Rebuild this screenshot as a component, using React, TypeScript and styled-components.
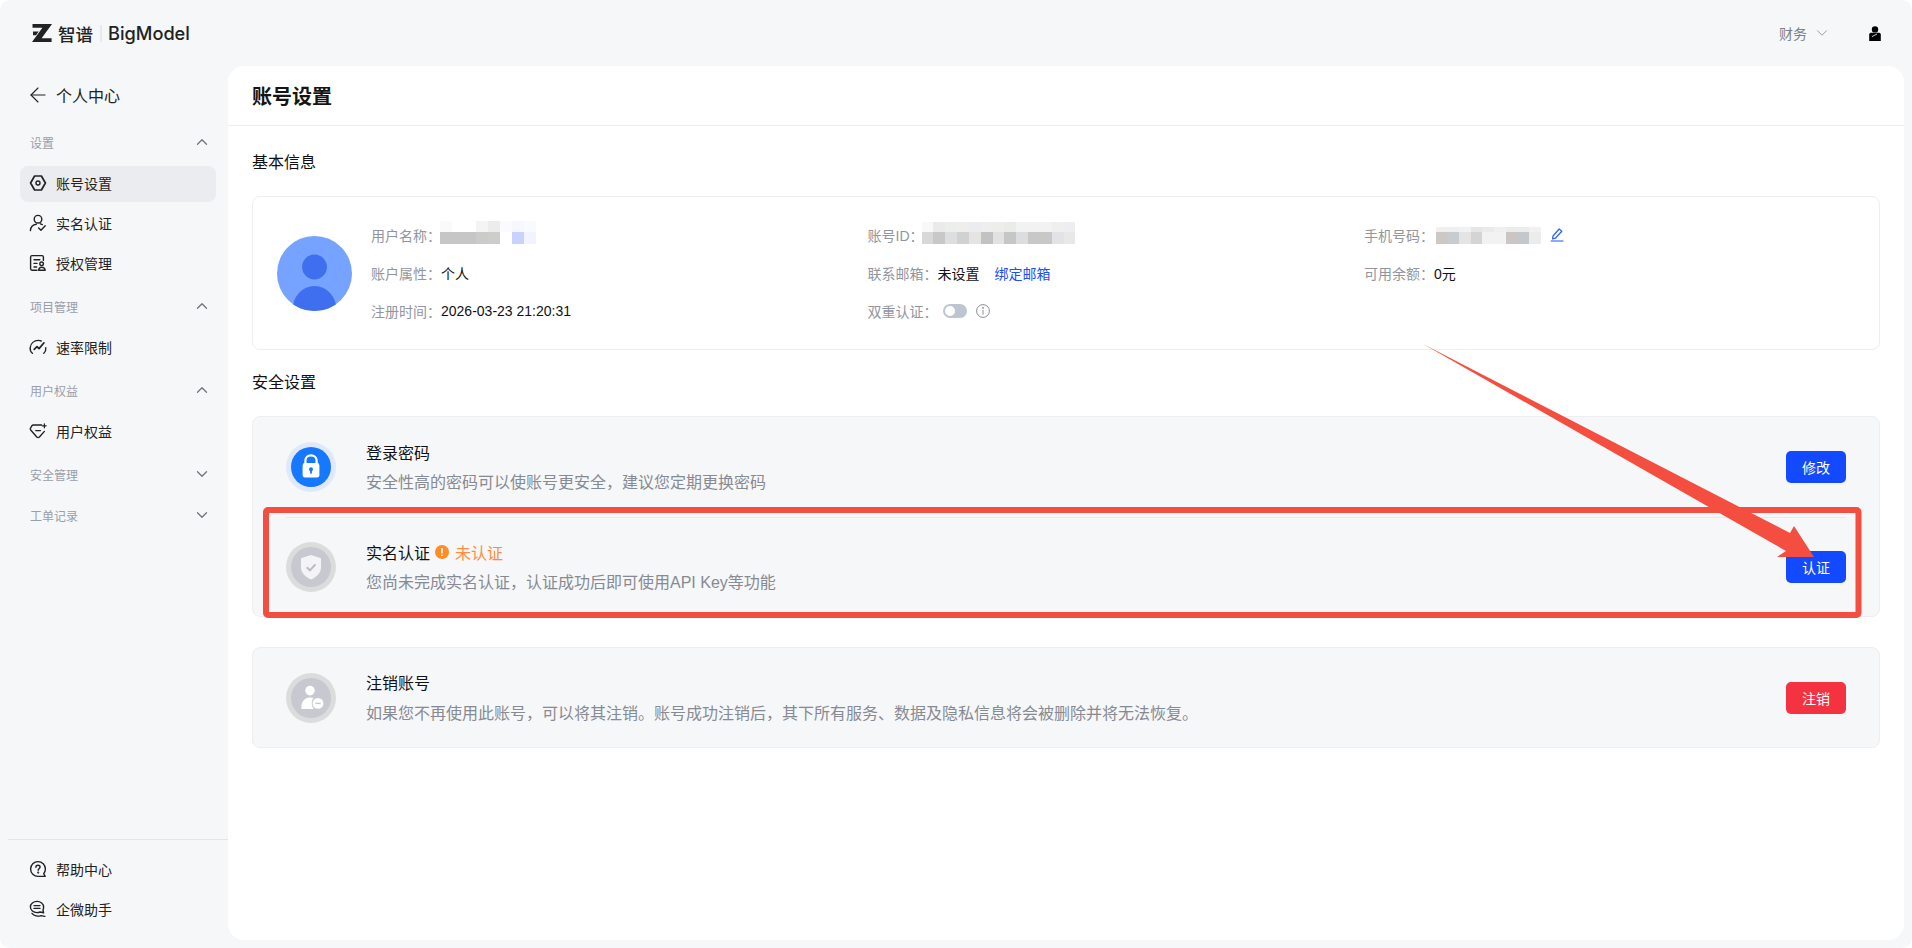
import styled, { createGlobalStyle } from 'styled-components'
import type { ReactNode } from 'react'
import { ArrowLeft, ChevronDown, ChevronUp } from 'lucide-react'

const GlobalStyle = createGlobalStyle`
  html, body {
    margin: 0;
    padding: 0;
    background: #fff;
  }
  * {
    box-sizing: border-box;
  }
  body {
    font-family: "Liberation Sans", "Noto Sans CJK SC", sans-serif;
    font-size: 14px;
    color: #111;
  }
`

const Frame = styled.div`
  position: relative;
  width: 1912px;
  height: 948px;
  background: #f6f7f9;
  border-radius: 10px;
  overflow: hidden;
  display: flex;
  flex-direction: column;
`

const TopBar = styled.header`
  height: 66px;
  flex-shrink: 0;
  display: flex;
  align-items: center;
  justify-content: space-between;
  padding: 0 31px 0 32px;
`

const Brand = styled.div`
  display: flex;
  align-items: center;
  color: #222;
`

const BrandCn = styled.span`
  margin-left: 6px;
  font-family: "Noto Sans CJK SC", sans-serif;
  font-size: 17.5px;
  font-weight: 500;
`

const BrandDivider = styled.i`
  width: 2px;
  height: 17px;
  margin: 0 6px 0 7px;
  background: #e8e9ec;
`

const BrandEn = styled.span`
  font-family: Inter, sans-serif;
  font-size: 18.2px;
  font-weight: 500;
`

const TopRight = styled.div`
  display: flex;
  align-items: center;
`

const RoleSwitch = styled.div`
  display: flex;
  align-items: center;
  gap: 6px;
  margin-right: 38px;
  font-size: 14px;
  color: #7c7f88;
`

const Body = styled.div`
  flex: 1;
  min-height: 0;
  display: flex;
  padding-bottom: 8px;
`

const Sidebar = styled.aside`
  width: 228px;
  flex-shrink: 0;
  display: flex;
  flex-direction: column;
  margin-bottom: -8px;
`

const BackLink = styled.div`
  height: 58px;
  padding: 0 0 0 26px;
  display: flex;
  align-items: center;
  gap: 6px;
  font-size: 16px;
  color: #222;
`

const Nav = styled.nav`
  flex: 1;
  padding: 1px 12px 0 20px;
`

const Group = styled.div<{ $open?: boolean }>`
  padding-bottom: ${(p) => (p.$open ? '7px' : '0')};
`

const GroupHead = styled.div`
  height: 36px;
  margin-bottom: 5px;
  padding: 0 5px 2px 10px;
  display: flex;
  align-items: center;
  justify-content: space-between;
  font-size: 12px;
  color: #999ea8;
  svg {
    color: #6f737c;
  }
`

const Item = styled.div<{ $active?: boolean }>`
  height: 36px;
  margin-bottom: 4px;
  padding: 0 0 2px 9px;
  display: flex;
  align-items: center;
  gap: 9px;
  border-radius: 8px;
  font-size: 14px;
  color: #222;
  background: ${(p) => (p.$active ? '#ebecef' : 'transparent')};
  &:last-child {
    margin-bottom: 0;
  }
`

const SideFoot = styled.div`
  margin-left: 8px;
  padding: 12px 12px 11px 12px;
  border-top: 1px solid #e3e5e9;
  height: 109px;
  display: flex;
  flex-direction: column;
`

const Main = styled.main`
  flex: 1;
  min-width: 0;
  margin-right: 8px;
  background: #fff;
  border-radius: 16px;
  display: flex;
  flex-direction: column;
`

const PageTitle = styled.h1`
  height: 60px;
  margin: 0;
  padding: 0 24px;
  display: flex;
  align-items: center;
  border-bottom: 1px solid #eceef0;
  font-size: 20px;
  font-weight: 700;
  color: #151515;
`

const Content = styled.div`
  padding: 0 24px;
`

const SectionTitle = styled.h2<{ $tight?: boolean }>`
  height: ${(p) => (p.$tight ? '66px' : '70px')};
  margin: 0;
  padding-bottom: ${(p) => (p.$tight ? '5px' : '0')};
  display: flex;
  align-items: center;
  font-size: 16px;
  font-weight: 400;
  color: #111;
`

const InfoCard = styled.section`
  height: 154px;
  display: flex;
  align-items: center;
  padding: 0 20px 0 24px;
  border: 1px solid #eceef0;
  border-radius: 8px;
`

const InfoGrid = styled.div`
  flex: 1;
  margin-left: 19px;
  display: grid;
  grid-template-columns: repeat(3, 496.5px);
  grid-auto-rows: 38px;
  align-items: center;
`

const InfoCell = styled.div`
  display: flex;
  align-items: center;
  height: 24px;
  white-space: nowrap;
  color: #111;
`

const Label = styled.span`
  color: #92959e;
`

const TextLink = styled.a`
  margin-left: 15px;
  color: #1a4fff;
`

const Toggle = styled.span`
  position: relative;
  width: 24px;
  height: 14px;
  margin-left: 5px;
  border-radius: 7px;
  background: #bfc5d0;
  &::after {
    content: '';
    position: absolute;
    left: 2px;
    top: 2px;
    width: 10px;
    height: 10px;
    border-radius: 50%;
    background: #fff;
  }
`

const InfoDot = styled.span`
  width: 14px;
  height: 14px;
  margin-left: 9px;
  display: flex;
`

const EditBtn = styled.span`
  margin-left: 9px;
  display: flex;
`

const MosaicGrid = styled.div<{ $cols: number; $cell: number; $rows: string; $pull: number }>`
  display: grid;
  grid-template-columns: repeat(${(p) => p.$cols}, ${(p) => p.$cell}px);
  grid-template-rows: ${(p) => p.$rows};
  align-self: flex-end;
  margin-bottom: 3px;
  margin-left: ${(p) => p.$pull}px;
`

const SecurityCard = styled.section<{ $gapTop?: number }>`
  margin-top: ${(p) => p.$gapTop ?? 0}px;
  padding: 0 33px;
  border: 1px solid #eceef0;
  border-radius: 8px;
  background: #f6f7f9;
`

const SecurityRow = styled.div`
  height: 99px;
  display: flex;
  align-items: center;
  &:not(:last-child) {
    height: 100px;
  }
  & + & {
    border-top: 1px solid #e8eaed;
  }
`

const RowIcon = styled.div`
  width: 50px;
  height: 50px;
  flex-shrink: 0;
`

const RowText = styled.div`
  flex: 1;
  margin-left: 30px;
  display: flex;
  flex-direction: column;
  gap: 8px;
`

const RowTitle = styled.div`
  display: flex;
  align-items: center;
  height: 23px;
  font-size: 16px;
  color: #111;
`

const RowDesc = styled.div`
  font-size: 16px;
  line-height: 23px;
  color: #868a93;
`

const Warn = styled.span`
  margin-left: 5px;
  display: flex;
  align-items: center;
  gap: 6px;
  color: #ff8c42;
`

const ActionButton = styled.button<{ $danger?: boolean }>`
  width: 60px;
  height: 32px;
  border: 0;
  border-radius: 5px;
  padding: 0;
  font: inherit;
  font-size: 14px;
  color: #fff;
  background: ${(p) => (p.$danger ? '#f5323f' : '#1349ff')};
`

const Annotation = styled.svg`
  position: absolute;
  left: 0;
  top: 0;
  pointer-events: none;
`

const LogoMark = () => (
  <svg width="20" height="18" viewBox="0 0 20 18">
    <path d="M0.5 0H20L9.6 14.2H19.6V18H0L10.4 3.8H0.5Z" fill="#222" />
    <path d="M1 7.6H6.6L4 11.2H1Z" fill="#222" />
  </svg>
)

const UserGlyph = () => (
  <svg width="12" height="15" viewBox="0 0 12 15" style={{ marginTop: 1 }}>
    <circle cx="6" cy="3.4" r="3.2" fill="#000" />
    <path d="M0.2 15V8.6C0.2 7.4 1.2 6.8 2.4 6.8H9.6C10.8 6.8 11.8 7.4 11.8 8.6V15Z" fill="#000" />
    <path d="M3 10.6L8 8" stroke="#fff" strokeWidth="0.8" />
  </svg>
)

type GlyphProps = { children: ReactNode }
const NavGlyph = ({ children }: GlyphProps) => (
  <svg
    width="18"
    height="18"
    viewBox="0 0 18 18"
    fill="none"
    stroke="#222"
    strokeWidth="1.4"
    strokeLinecap="round"
    strokeLinejoin="round"
  >
    {children}
  </svg>
)

const GearIcon = () => (
  <NavGlyph>
    <path d="M5.6 2H12.4L16.4 9L12.4 16H5.6L1.6 9Z" strokeWidth="1.7" />
    <circle cx="9" cy="9" r="2" />
  </NavGlyph>
)

const PersonCheckIcon = () => (
  <NavGlyph>
    <circle cx="9" cy="5.2" r="3.8" />
    <path d="M1.4 16.6C1.6 13 4 10.6 7.4 10.2" />
    <path d="M9.6 14L12 16.2L16.2 11.8" />
    <path d="M11.4 9.8L13.4 10.6" />
  </NavGlyph>
)

const LicenseIcon = () => (
  <NavGlyph>
    <path d="M8 16.2H3C2.2 16.2 1.6 15.6 1.6 14.8V3C1.6 2.2 2.2 1.6 3 1.6H13C13.8 1.6 14.4 2.2 14.4 3V6.4" />
    <path d="M5 5.8H10.8" />
    <path d="M5 9.4H8" />
    <path d="M5 13H7.6" />
    <circle cx="12.6" cy="9.8" r="1.8" />
    <path d="M9.6 16.2C9.8 14 11 13.2 12.8 13.2C14.6 13.2 15.8 14 16.2 16.2Z" />
  </NavGlyph>
)

const SpeedIcon = () => (
  <NavGlyph>
    <path d="M3.4 15.2C1.6 13.8 1 11.6 1.2 9.6C1.8 5.4 5 2.4 9.2 2.4C10.2 2.4 11.4 2.6 12.2 3" />
    <path d="M14.8 15.2C16.4 13.8 17 11.6 16.8 9.8" />
    <path d="M5.2 11.4L8 8.6L10 10.6L15 4.8" strokeWidth="1.7" />
  </NavGlyph>
)

const DiamondIcon = () => (
  <NavGlyph>
    <path d="M12.6 3H4.6C3.8 3 3.2 3.3 2.7 4L1.4 6.4C1.2 7 1.3 7.6 1.7 8L7.8 15C8.6 15.8 9.6 15.8 10.4 15L15.4 9.4" />
    <path d="M6.8 8.6H11.4" />
    <path d="M15.4 1.8V5.8M13.4 3.8H17.2" strokeWidth="1.2" />
  </NavGlyph>
)

const HelpIcon = () => (
  <NavGlyph>
    <path d="M9 1.6C4.9 1.6 1.6 4.9 1.6 9C1.6 13.1 4.9 16.4 9 16.4H16.2L14.7 13.6C15.8 12.4 16.4 10.8 16.4 9C16.4 4.9 13.1 1.6 9 1.6Z" />
    <path d="M6.9 7.2C6.9 6 7.8 5.2 9 5.2C10.2 5.2 11.1 6 11.1 7.1C11.1 8.4 9.2 8.6 9.2 10.2" />
    <circle cx="9.2" cy="12.6" r="0.4" fill="#222" />
  </NavGlyph>
)

const ChatIcon = () => (
  <NavGlyph>
    <path d="M8 1.4C4.4 1.4 1.4 3.8 1.4 7C1.4 10.2 4.4 12.6 8 12.6C9 12.6 10 12.4 11 12L14.6 12.8L14 10C14.4 9.2 14.6 8 14.6 7C14.6 3.8 11.6 1.4 8 1.4Z" />
    <path d="M5 5.6H11M5 8.4H11" />
    <path d="M3 13.4C5 16 9 16.8 12 15.6L15.8 16.4" />
  </NavGlyph>
)

const LockBadge = () => (
  <svg width="50" height="50" viewBox="0 0 50 50">
    <circle cx="25" cy="25" r="25" fill="#e0e8fb" />
    <circle cx="25" cy="25" r="20" fill="#1677ff" />
    <path d="M19.4 22V18.6C19.4 15.4 21.8 13.4 25 13.4C28.2 13.4 30.6 15.4 30.6 18.6V22" fill="none" stroke="#fff" strokeWidth="2.2" />
    <rect x="16.6" y="21" width="16.8" height="14.6" rx="2.4" fill="#fff" />
    <circle cx="25" cy="27.2" r="2" fill="#1677ff" />
    <rect x="24.1" y="27.6" width="1.8" height="4" fill="#1677ff" />
  </svg>
)

const ShieldBadge = () => (
  <svg width="50" height="50" viewBox="0 0 50 50">
    <circle cx="25" cy="25" r="25" fill="#dcdcdc" />
    <circle cx="25" cy="25" r="20" fill="#c8c9d0" />
    <path d="M25 13L35 16.2V25C35 31 30.6 35 25 37.4C19.4 35 15 31 15 25V16.2Z" fill="#f4f4f6" />
    <path d="M20.8 25.2L24 28.4L29.4 22.4" fill="none" stroke="#b9bac2" strokeWidth="2" />
  </svg>
)

const UserMinusBadge = () => (
  <svg width="50" height="50" viewBox="0 0 50 50">
    <circle cx="25" cy="25" r="25" fill="#dcdcdc" />
    <circle cx="25" cy="25" r="20" fill="#c8c9d0" />
    <circle cx="24" cy="17.6" r="4.8" fill="#fff" />
    <path d="M15.4 36C15 29.6 17.8 24.4 24 24.4C25.4 24.4 26.6 24.6 27.6 25C25.2 27.6 25 32.6 27.8 36Z" fill="#fff" />
    <circle cx="32" cy="30.4" r="5.4" fill="#fff" />
    <rect x="29.4" y="29.7" width="5.2" height="1.4" fill="#c8c9d0" />
  </svg>
)

const Avatar = () => (
  <svg width="75" height="75" viewBox="0 0 75 75" style={{ flexShrink: 0 }}>
    <defs>
      <clipPath id="avatar-clip">
        <circle cx="37.5" cy="37.5" r="37.5" />
      </clipPath>
    </defs>
    <circle cx="37.5" cy="37.5" r="37.5" fill="#76a3ff" />
    <g clipPath="url(#avatar-clip)" fill="#3f6fee">
      <circle cx="37.5" cy="31" r="12.4" />
      <ellipse cx="37.5" cy="74" rx="22" ry="24" />
    </g>
  </svg>
)

const InfoGlyph = () => (
  <svg width="14" height="14" viewBox="0 0 14 14" fill="none" stroke="#8a8d95" strokeWidth="1">
    <circle cx="7" cy="7" r="6.4" />
    <path d="M7 6V10.6" />
    <circle cx="7" cy="3.9" r="0.5" fill="#8a8d95" />
  </svg>
)

const WarnGlyph = () => (
  <svg width="14" height="14" viewBox="0 0 14 14">
    <circle cx="7" cy="7" r="7" fill="#ff8c26" />
    <rect x="6.2" y="3" width="1.6" height="5.4" rx="0.6" fill="#fff" />
    <circle cx="7" cy="10.3" r="0.9" fill="#fff" />
  </svg>
)

const EditGlyph = () => (
  <svg width="14" height="14" viewBox="0 0 14 14" fill="none" stroke="#2f66f0" strokeWidth="1.3" strokeLinejoin="round">
    <path d="M9.2 1L11.8 3.2L5.4 10.2L2.6 10.8L3 8Z" />
    <path d="M0.8 13H13.4" stroke="#5c86f5" strokeWidth="1.4" />
  </svg>
)

type MosaicProps = { colors: string[]; cols: number; cell: number; rows: string; pull?: number }
const Mosaic = ({ colors, cols, cell, rows, pull = 0 }: MosaicProps) => (
  <MosaicGrid $cols={cols} $cell={cell} $rows={rows} $pull={pull}>
    {colors.map((c, i) => (
      <div key={i} style={{ background: c }} />
    ))}
  </MosaicGrid>
)

const nameCells = [
  '#fafafa', '#ffffff', '#ffffff', '#f4f4f4', '#ececec', '#fafaff', '#f6f7ff', '#f9faff',
  '#c6c6c6', '#c6c6c6', '#c6c6c6', '#cbcbc9', '#cdcdcb', '#ffffff', '#c8d2fb', '#f1f3ff',
]
const idCells = [
  '#f8f8f8', '#eaeaea', '#eceeee', '#f0eeec', '#eaecef', '#eeeeee', '#eeedeb', '#eaecea', '#f2f2f2', '#f2f2f2', '#f2f2f2', '#efefef', '#eeeef0',
  '#d8d8d6', '#c8c8c8', '#dcdee0', '#d0d2d2', '#e6e4e2', '#c2c2c2', '#e2e2e2', '#c6c6c6', '#dcdde0', '#c8c8c8', '#cac8c6', '#e2e3e6', '#e8e8e8',
]
const phoneCells = [
  '#f0f0f0', '#f0f0f0', '#f2f2f2', '#e6e6e6', '#eaeaea', '#f0f0f0', '#ececec', '#ececec', '#f2f2f2',
  '#cbc8c6', '#c6ccd0', '#e4e4e4', '#d4d4d4', '#f2f2f2', '#f2f2f2', '#cbc6c3', '#c4c8cc', '#ececec',
]

const App = () => {
  return (
    <Frame>
      <GlobalStyle />
      <TopBar>
        <Brand>
          <LogoMark />
          <BrandCn>智谱</BrandCn>
          <BrandDivider />
          <BrandEn>BigModel</BrandEn>
        </Brand>
        <TopRight>
          <RoleSwitch>
            财务
            <ChevronDown size={18} strokeWidth={1} />
          </RoleSwitch>
          <UserGlyph />
        </TopRight>
      </TopBar>
      <Body>
        <Sidebar>
          <BackLink>
            <ArrowLeft size={24} strokeWidth={1.1} />
            个人中心
          </BackLink>
          <Nav>
            <Group $open>
              <GroupHead>
                设置
                <ChevronUp size={18} strokeWidth={1.7} />
              </GroupHead>
              <Item $active>
                <GearIcon />
                账号设置
              </Item>
              <Item>
                <PersonCheckIcon />
                实名认证
              </Item>
              <Item>
                <LicenseIcon />
                授权管理
              </Item>
            </Group>
            <Group $open>
              <GroupHead>
                项目管理
                <ChevronUp size={18} strokeWidth={1.7} />
              </GroupHead>
              <Item>
                <SpeedIcon />
                速率限制
              </Item>
            </Group>
            <Group $open>
              <GroupHead>
                用户权益
                <ChevronUp size={18} strokeWidth={1.7} />
              </GroupHead>
              <Item>
                <DiamondIcon />
                用户权益
              </Item>
            </Group>
            <Group>
              <GroupHead>
                安全管理
                <ChevronDown size={18} strokeWidth={1.7} />
              </GroupHead>
            </Group>
            <Group>
              <GroupHead>
                工单记录
                <ChevronDown size={18} strokeWidth={1.7} />
              </GroupHead>
            </Group>
          </Nav>
          <SideFoot>
            <Item>
              <HelpIcon />
              帮助中心
            </Item>
            <Item>
              <ChatIcon />
              企微助手
            </Item>
          </SideFoot>
        </Sidebar>
        <Main>
          <PageTitle>账号设置</PageTitle>
          <Content>
            <SectionTitle>基本信息</SectionTitle>
            <InfoCard>
              <Avatar />
              <InfoGrid>
                <InfoCell>
                  <Label>用户名称：</Label>
                  <Mosaic colors={nameCells} cols={8} cell={12} rows="11px 12px" pull={-1} />
                </InfoCell>
                <InfoCell>
                  <Label>账号ID：</Label>
                  <Mosaic colors={idCells} cols={13} cell={11.85} rows="10px 12px" pull={-2} />
                </InfoCell>
                <InfoCell>
                  <Label>手机号码：</Label>
                  <Mosaic colors={phoneCells} cols={9} cell={11.7} rows="5px 12px" pull={1.5} />
                  <EditBtn>
                    <EditGlyph />
                  </EditBtn>
                </InfoCell>
                <InfoCell>
                  <Label>账户属性：</Label>个人
                </InfoCell>
                <InfoCell>
                  <Label>联系邮箱：</Label>未设置
                  <TextLink>绑定邮箱</TextLink>
                </InfoCell>
                <InfoCell>
                  <Label>可用余额：</Label>0元
                </InfoCell>
                <InfoCell>
                  <Label>注册时间：</Label>2026-03-23 21:20:31
                </InfoCell>
                <InfoCell>
                  <Label>双重认证：</Label>
                  <Toggle />
                  <InfoDot>
                    <InfoGlyph />
                  </InfoDot>
                </InfoCell>
              </InfoGrid>
            </InfoCard>
            <SectionTitle $tight>安全设置</SectionTitle>
            <SecurityCard>
              <SecurityRow>
                <RowIcon>
                  <LockBadge />
                </RowIcon>
                <RowText>
                  <RowTitle>登录密码</RowTitle>
                  <RowDesc>安全性高的密码可以使账号更安全，建议您定期更换密码</RowDesc>
                </RowText>
                <ActionButton>修改</ActionButton>
              </SecurityRow>
              <SecurityRow>
                <RowIcon>
                  <ShieldBadge />
                </RowIcon>
                <RowText>
                  <RowTitle>
                    实名认证
                    <Warn>
                      <WarnGlyph />
                      未认证
                    </Warn>
                  </RowTitle>
                  <RowDesc>您尚未完成实名认证，认证成功后即可使用API Key等功能</RowDesc>
                </RowText>
                <ActionButton>认证</ActionButton>
              </SecurityRow>
            </SecurityCard>
            <SecurityCard $gapTop={30}>
              <SecurityRow>
                <RowIcon>
                  <UserMinusBadge />
                </RowIcon>
                <RowText>
                  <RowTitle>注销账号</RowTitle>
                  <RowDesc>如果您不再使用此账号，可以将其注销。账号成功注销后，其下所有服务、数据及隐私信息将会被删除并将无法恢复。</RowDesc>
                </RowText>
                <ActionButton $danger>注销</ActionButton>
              </SecurityRow>
            </SecurityCard>
          </Content>
        </Main>
      </Body>
      <Annotation width="1912" height="948" viewBox="0 0 1912 948">
        <rect x="266" y="510" width="1592.5" height="105" rx="2" fill="none" stroke="#f44e40" strokeWidth="6" />
        <path d="M1423 344L1790 533L1794 526L1814 557H1777L1786 551Z" fill="#f44e40" />
      </Annotation>
    </Frame>
  )
}

export default App
